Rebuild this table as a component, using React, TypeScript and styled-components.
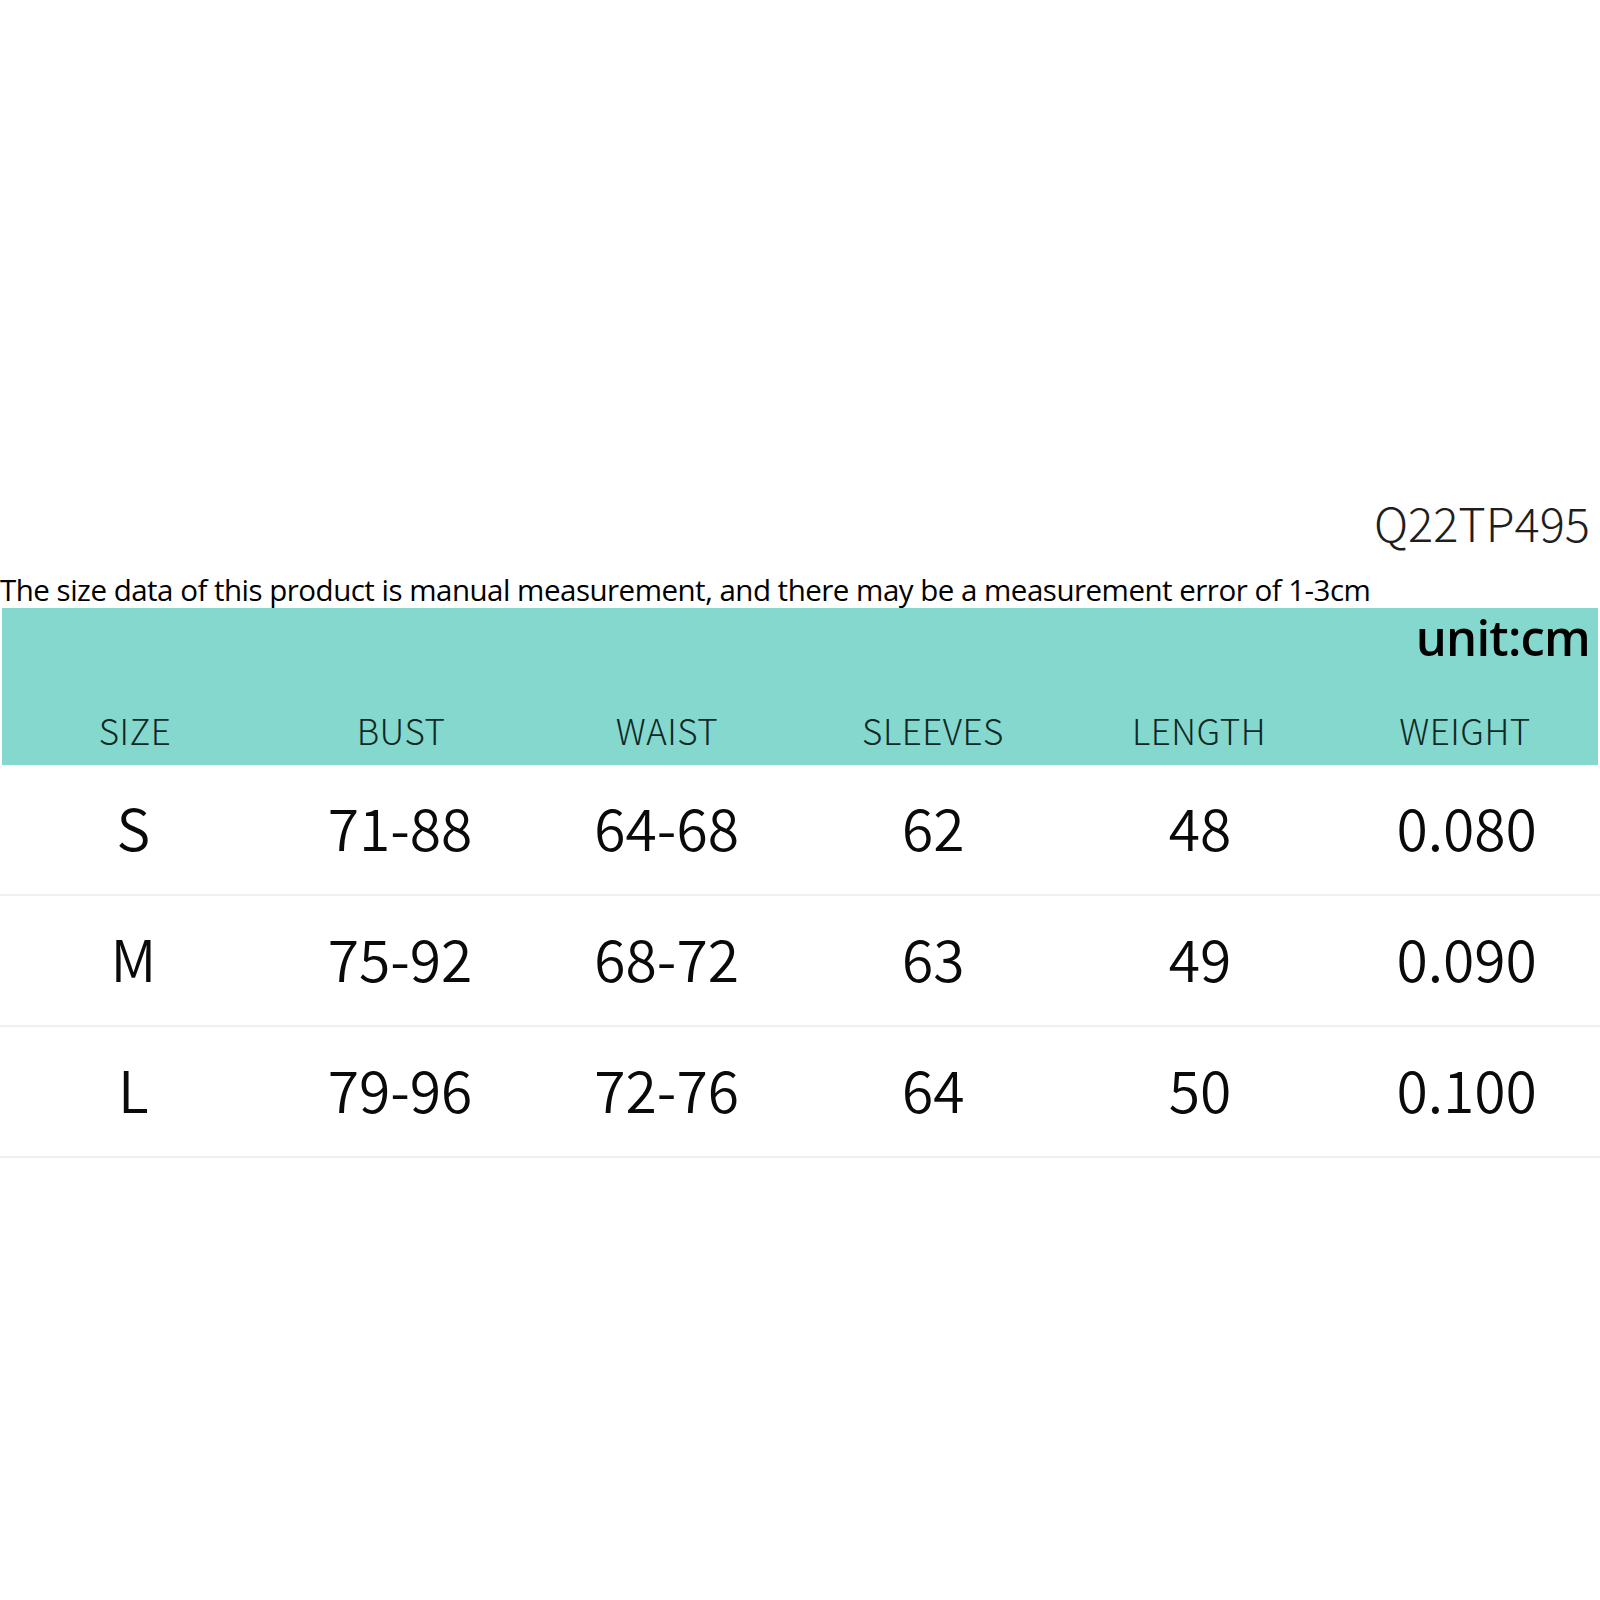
import React from "react";
import styled, { createGlobalStyle } from "styled-components";

const Global = createGlobalStyle`
  html, body { margin: 0; padding: 0; background: #ffffff; }
  body { width: 1600px; height: 1600px; overflow: hidden; }
`;

const Page = styled.div`
  width: 1600px;
  height: 1600px;
  background: #fff;
  display: flex;
  flex-direction: column;
  padding-top: 494px;
  box-sizing: border-box;
`;

const Code = styled.div`
  font-family: "Noto Sans CJK SC", "Noto Sans", sans-serif;
  font-weight: 300;
  font-size: 47px;
  line-height: 56px;
  height: 60px;
  color: #1e1e1e;
  text-align: right;
  padding-right: 10px;
`;

const Note = styled.div`
  font-family: "Open Sans", sans-serif;
  font-size: 29.5px;
  line-height: 36px;
  height: 54px;
  display: flex;
  align-items: flex-end;
  color: #000;
  white-space: nowrap;
  letter-spacing: -0.5px;
`;

const Header = styled.div`
  background: #84d8ce;
  height: 157px;
  margin: 0 2px;
  display: flex;
  flex-direction: column;
  justify-content: space-between;
`;

const Unit = styled.div`
  font-family: "Open Sans", sans-serif;
  font-weight: 600;
  font-size: 49px;
  line-height: 58px;
  color: #000;
  text-align: right;
  padding-right: 8px;
  letter-spacing: -0.8px;
`;

const Grid = styled.div<{ $h: number }>`
  display: grid;
  grid-template-columns: repeat(6, 1fr);
  align-items: center;
  height: ${(p) => p.$h}px;
`;

const Label = styled.div`
  font-family: "Noto Sans CJK SC", "Noto Sans", sans-serif;
  font-weight: 300;
  font-size: 35px;
  color: #102826;
  text-align: center;
  letter-spacing: 0.5px;
`;

const Row = styled(Grid)`
  border-bottom: 2px solid #f0f0f0;
  box-sizing: border-box;
`;

const Cell = styled.div`
  font-family: "Noto Sans CJK SC", "Noto Sans", sans-serif;
  font-weight: 350;
  font-size: 57px;
  line-height: 70px;
  padding-bottom: 8px;
  color: #0a0a0a;
  text-align: center;
`;

const labels = ["SIZE", "BUST", "WAIST", "SLEEVES", "LENGTH", "WEIGHT"];
const rows = [
  ["S", "71-88", "64-68", "62", "48", "0.080"],
  ["M", "75-92", "68-72", "63", "49", "0.090"],
  ["L", "79-96", "72-76", "64", "50", "0.100"],
];

export default function App() {
  return (
    <>
      <Global />
      <Page>
        <Code>Q22TP495</Code>
        <Note>
          The size data of this product is manual measurement, and there may be a measurement error of 1-3cm
        </Note>
        <Header>
          <Unit>unit:cm</Unit>
          <Grid $h={72}>
            {labels.map((l) => (
              <Label key={l}>{l}</Label>
            ))}
          </Grid>
        </Header>
        {rows.map((r) => (
          <Row $h={131} key={r[0]}>
            {r.map((c, i) => (
              <Cell key={i}>{c}</Cell>
            ))}
          </Row>
        ))}
      </Page>
    </>
  );
}
